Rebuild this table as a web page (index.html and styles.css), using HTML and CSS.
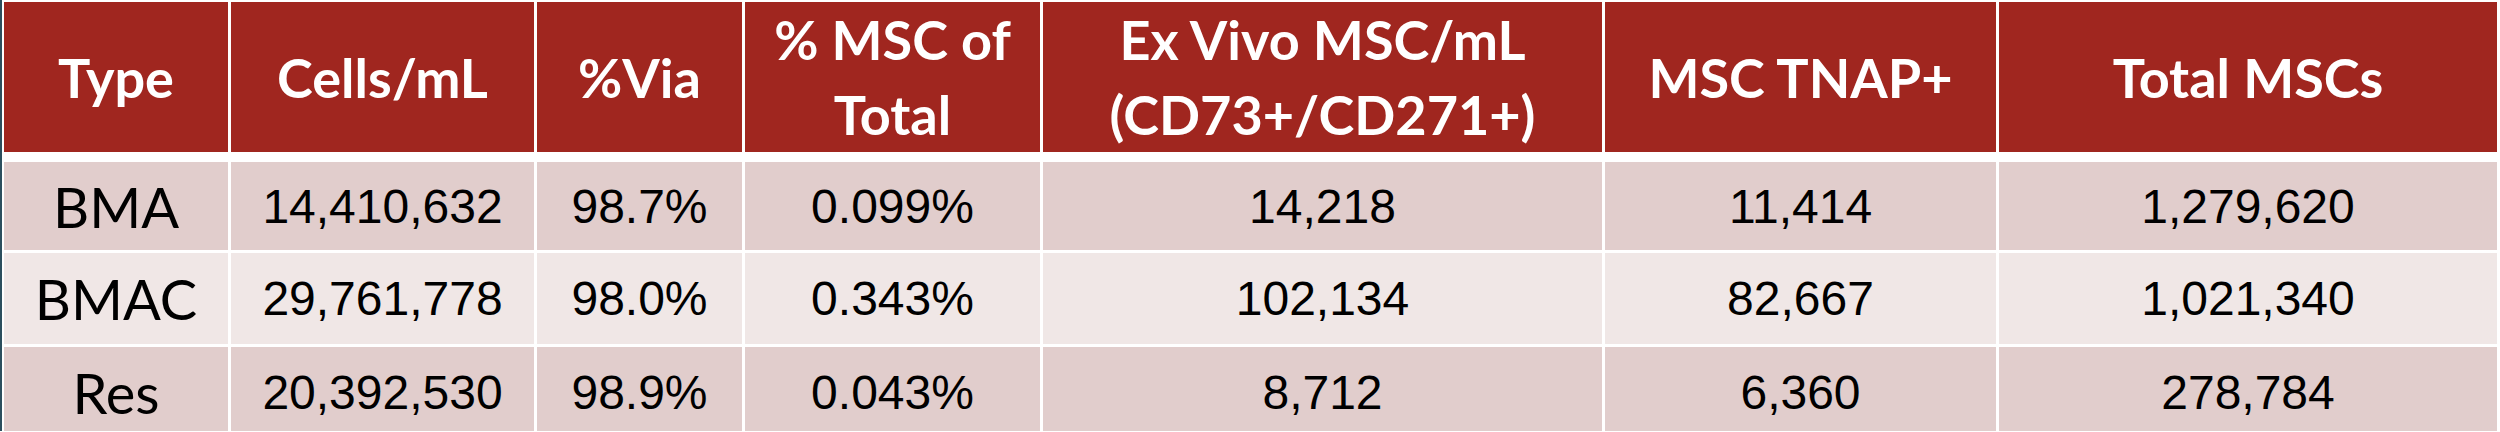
FILE: index.html
```html
<!DOCTYPE html>
<html lang="en">
<head>
    <meta charset="UTF-8">
    <meta name="viewport" content="width=device-width, initial-scale=1.0">
    <title>MSC Yield Table</title>
    <link rel="stylesheet" href="styles.css">
</head>
<body>
    <div class="slide">
        <table class="yield-table">
            <colgroup>
                <col class="c-type">
                <col class="c-cells">
                <col class="c-via">
                <col class="c-msc">
                <col class="c-exvivo">
                <col class="c-tnap">
                <col class="c-total">
            </colgroup>
            <thead>
                <tr>
                    <th>Type</th>
                    <th>Cells/mL</th>
                    <th>%Via</th>
                    <th>% MSC of<br>Total</th>
                    <th>Ex Vivo MSC/mL<br>(CD73+/CD271+)</th>
                    <th>MSC TNAP+</th>
                    <th>Total MSCs</th>
                </tr>
            </thead>
            <tbody>
                <tr>
                    <td class="type">BMA</td>
                    <td>14,410,632</td>
                    <td>98.7%</td>
                    <td>0.099%</td>
                    <td>14,218</td>
                    <td>11,414</td>
                    <td>1,279,620</td>
                </tr>
                <tr>
                    <td class="type">BMAC</td>
                    <td>29,761,778</td>
                    <td>98.0%</td>
                    <td>0.343%</td>
                    <td>102,134</td>
                    <td>82,667</td>
                    <td>1,021,340</td>
                </tr>
                <tr>
                    <td class="type">Res</td>
                    <td>20,392,530</td>
                    <td>98.9%</td>
                    <td>0.043%</td>
                    <td>8,712</td>
                    <td>6,360</td>
                    <td>278,784</td>
                </tr>
            </tbody>
        </table>
    </div>
</body>
</html>
```

FILE: styles.css
```css
:root {
    --head-bg: #a0261f;
    --row-dark: #e1cdcc;
    --row-light: #f0e7e6;
    --edge: #2c4f5e;
}

* {
    box-sizing: border-box;
}

body {
    margin: 0;
    background-color: #ffffff;
    overflow: hidden;
}

.slide {
    border-left: 2px solid var(--edge);
    height: 432px;
}

.yield-table {
    table-layout: fixed;
    width: 2499px;
    margin: -1px 0 0 -1px;
    border-collapse: separate;
    border-spacing: 3px;
    text-align: center;
}

.c-type { width: 224px; }
.c-cells { width: 303px; }
.c-via { width: 205px; }
.c-msc { width: 295px; }
.c-exvivo { width: 559px; }
.c-tnap { width: 391px; }
.c-total { width: 498px; }

.yield-table th {
    height: 141px;
    padding: 0;
    background-color: var(--head-bg);
    color: #ffffff;
    font-family: Lato, "Liberation Sans", sans-serif;
    font-weight: 700;
    font-size: 54px;
    line-height: 75px;
    vertical-align: middle;
}

.yield-table td {
    height: 91px;
    padding: 0;
    font-family: "Liberation Sans", Arial, sans-serif;
    font-size: 48px;
    color: #000000;
    vertical-align: middle;
}

.yield-table tbody tr:nth-child(odd) td {
    background-color: var(--row-dark);
}

.yield-table tbody tr:nth-child(even) td {
    background-color: var(--row-light);
}

.yield-table tbody tr:first-child td {
    height: 95px;
    border-top: 7px solid #ffffff;
}

.yield-table td.type {
    font-family: Lato, "Liberation Sans", sans-serif;
    font-size: 56px;
}
```
